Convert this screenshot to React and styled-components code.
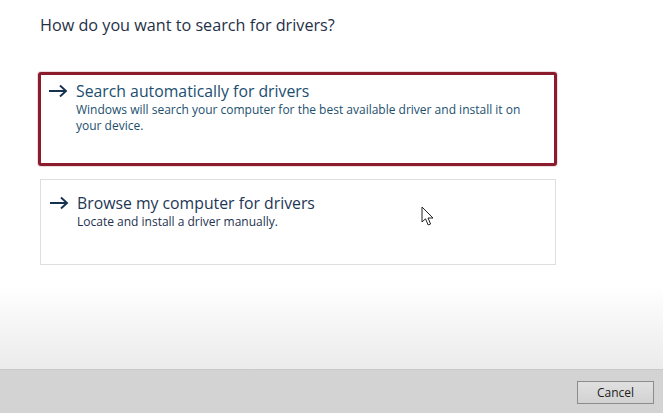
import React from 'react'
import styled, {createGlobalStyle} from 'styled-components'

const Global = createGlobalStyle`
    html, body {
        margin: 0;
        padding: 0;
        background: #fff;
    }
    body {
        font-family: "Open Sans", "Noto Sans", sans-serif;
    }
`

const options = [
    {
        title: 'Search automatically for drivers',
        desc: 'Windows will search your computer for the best available driver and install it on your device.',
        focused: true,
    },
    {
        title: 'Browse my computer for drivers',
        desc: 'Locate and install a driver manually.',
        focused: false,
    },
]

function Arrow() {
    return (
        <svg width="20" height="14" viewBox="0 0 20 14">
            <path d="M1 7 H18 M12 1.5 L18 7 L12 12.5" fill="none" stroke="#17324f" strokeWidth="1.9" />
        </svg>
    )
}

function Cursor() {
    return (
        <svg width="14" height="21" viewBox="0 0 14 21">
            <path d="M1 1 L1 16 L4.5 12.8 L7.2 19 L9.6 18 L7 12 L12 12 Z" fill="#fff" stroke="#222" strokeWidth="1" strokeLinejoin="round" />
        </svg>
    )
}

export default function App() {
    return (
        <Page>
            <Global />
            <Content>
                <Heading>How do you want to search for drivers?</Heading>
                <List>
                    {options.map((o) => (
                        <Option key={o.title} focused={o.focused}>
                            <ArrowCell><Arrow /></ArrowCell>
                            <Title focused={o.focused}>{o.title}</Title>
                            <Desc focused={o.focused}>{o.desc}</Desc>
                        </Option>
                    ))}
                </List>
            </Content>
            <Footer>
                <Button>Cancel</Button>
            </Footer>
            <Pointer><Cursor /></Pointer>
        </Page>
    )
}

const Page = styled.div`
    position: relative;
    width: 663px;
    height: 413px;
    display: flex;
    flex-direction: column;
    overflow: hidden;
    background: linear-gradient(#fff 0, #fff 285px, #ebebeb 369px);
`

const Content = styled.div`
    flex: 1;
    padding: 13px 0 0 40px;
    border-bottom: 1px solid #c9c9c9;
`

const Heading = styled.h1`
    margin: 0;
    font-size: 16.2px;
    font-weight: 400;
    line-height: 24px;
    color: #1f3147;
`

const List = styled.div`
    display: flex;
    flex-direction: column;
    gap: 13px;
    margin-top: 35px;
    width: 516px;
`

const Option = styled.div`
    display: grid;
    grid-template-columns: 28px 1fr;
    align-content: start;
    box-sizing: border-box;
    background: #fff;
    ${(p) => p.focused ? `
        height: 94px;
        margin-left: -2px;
        width: 519px;
        padding: 5px 20px 0 7px;
        border: 3px solid #8b1c2d;
        border-radius: 3px;
        box-shadow: 0 0 0 1px rgba(139, 28, 45, 0.15);
    ` : `
        height: 86px;
        padding: 12px 20px 0 8px;
        border: 1px solid #dedede;
    `}
`

const ArrowCell = styled.div`
    display: flex;
    align-items: center;
    height: 22px;
`

const Title = styled.div`
    font-size: 15.8px;
    line-height: 22px;
    color: ${(p) => p.focused ? '#1a4e70' : '#1d3656'};
`

const Desc = styled.div`
    grid-column: 2;
    font-size: 12px;
    line-height: 16px;
    color: ${(p) => p.focused ? '#1b4f6e' : '#1e3150'};
`

const Footer = styled.div`
    height: 43px;
    flex-shrink: 0;
    background: #d3d3d3;
    display: flex;
    justify-content: flex-end;
    align-items: center;
    padding-right: 9px;
`

const Button = styled.button`
    width: 77px;
    height: 23px;
    margin-top: 1px;
    border: 1px solid #8c8c8c;
    background: linear-gradient(#e0e0e0, #d2d2d2);
    font-family: "Open Sans", "Noto Sans", sans-serif;
    font-size: 12px;
    color: #222;
    padding: 0;
`

const Pointer = styled.div`
    position: absolute;
    left: 421px;
    top: 206px;
    line-height: 0;
`
